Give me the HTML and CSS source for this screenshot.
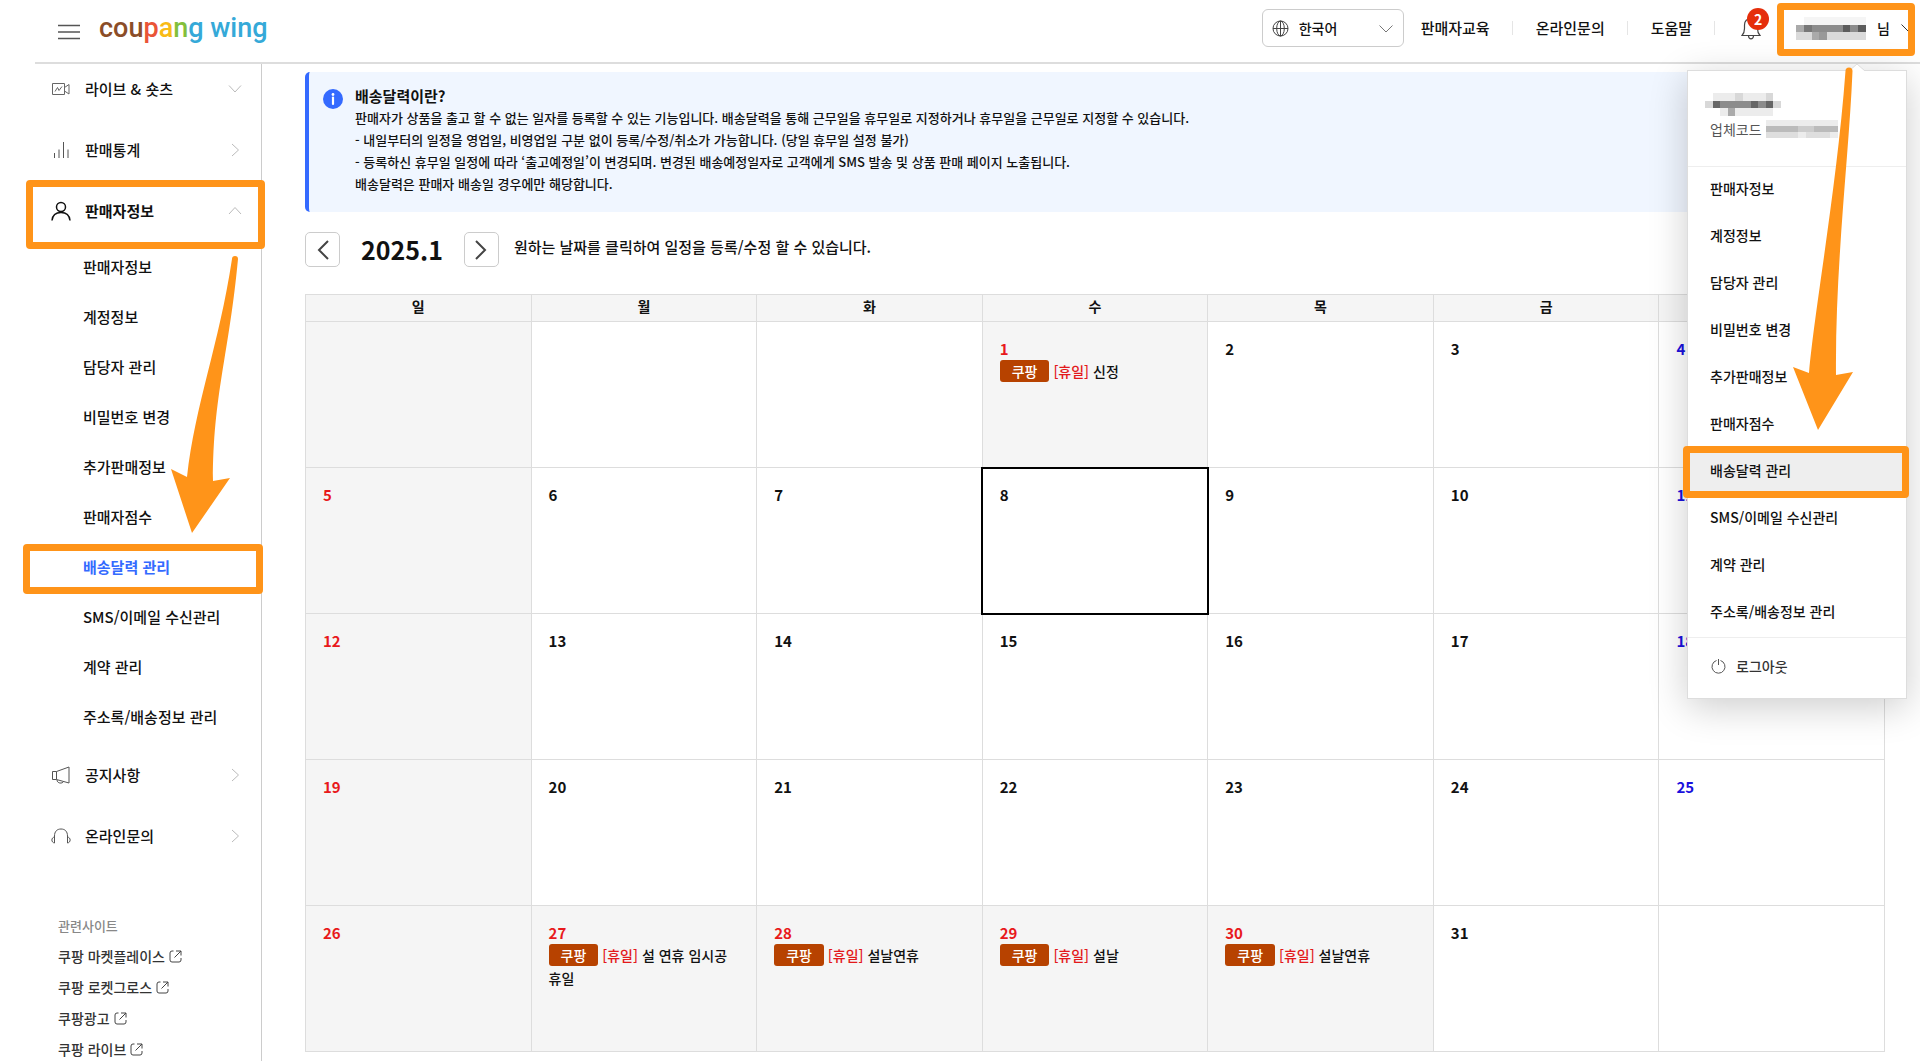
FILE: index.html
```
<!DOCTYPE html>
<html lang="ko">
<head>
    <meta charset="UTF-8">
    <meta name="viewport" content="width=device-width, initial-scale=1.0">
    <title>쿠팡 윙 - 배송달력 관리</title>
    <link rel="stylesheet" href="styles.css">
</head>
<body>
    <header class="header">
        <button type="button" class="menu-btn" aria-label="메뉴">
            <svg width="22" height="16" viewBox="0 0 22 16"><path d="M0 1.500h22M0 8h22M0 14.500h22" stroke="#555" stroke-width="1.300"/></svg>
        </button>
        <a href="#" class="logo"><span class="brown">cou</span><span class="red">p</span><span class="yellow">a</span><span class="green">n</span>g wing</a>

        <div class="header-right">
            <div class="lang">
                <svg class="lang-globe" width="17" height="17" viewBox="0 0 17 17" fill="none" stroke="#444"><circle cx="8.500" cy="8.500" r="7.500"/><ellipse cx="8.500" cy="8.500" rx="3.800" ry="7.500"/><path d="M8.500 1v15M1 8.500h15"/></svg>
                <select class="lang-select" aria-label="언어">
                    <option>한국어</option>
                </select>
                <svg class="lang-arrow" width="14" height="8" viewBox="0 0 14 8" fill="none" stroke="#777"><path d="M.5 .5L7 7l6.500-6.500"/></svg>
            </div>
            <nav class="top-nav">
                <a href="#">판매자교육</a>
                <a href="#">온라인문의</a>
                <a href="#">도움말</a>
            </nav>
            <button type="button" class="bell" aria-label="알림">
                <svg width="20" height="24" viewBox="0 0 20 24" fill="none" stroke="#444" stroke-width="1.200"><path d="M1 19.500h18c-2-2-2.500-3.500-2.500-7V9c0-4-2.500-6.500-6.500-6.500S3.500 5 3.500 9v3.500c0 3.500-.5 5-2.500 7zM7.500 20c.2 1.800 1.200 2.800 2.500 2.800s2.300-1 2.500-2.800"/></svg>
                <span class="bell-count">2</span>
            </button>
            <div class="account">
                <button type="button" class="account-btn">
                    <svg width="70" height="23" viewBox="0 0 9 3" preserveAspectRatio="none" shape-rendering="crispEdges">
                        <path fill="#f5f5f5" d="M1 0h8v1H1z"/>
                        <path fill="#dadada" d="M0 2h9v1H0z"/>
                        <path fill="#aaa" d="M0 1h1v1H0zM2 2h1v1H2z"/>
                        <path fill="#999" d="M3 2h1v1H3z"/>
                        <path fill="#8c8c8c" d="M1 1h8v1H1z"/>
                        <path fill="#777" d="M1 1h1v1H1z"/>
                        <path fill="#5c5c5c" d="M6 1h1v1H6zM8 1h1v1H8z"/>
                    </svg>
                    <span>님</span>
                    <svg width="14" height="8" viewBox="0 0 14 8" fill="none" stroke="#333"><path d="M.5 .5L7 7l6.500-6.500"/></svg>
                </button>
                <span class="mark mark-account"></span>

                <div class="dropdown">
                    <svg class="dropdown-caret" width="16" height="8" viewBox="0 0 16 8"><path d="M0 8l8-7 8 7" fill="#fff" stroke="#ddd"/></svg>
                    <div class="dropdown-head">
                        <svg width="76" height="23" viewBox="0 0 10 3" preserveAspectRatio="none" shape-rendering="crispEdges">
                            <path fill="#ececec" d="M1 0h8v1H1zM2 2h7v1H2z"/>
                            <path fill="#d8d8d8" d="M0 1h10v1H0zM4 0h1v1H4zM8 0h1v1H8z"/>
                            <path fill="#8c8c8c" d="M1 1h8v1H1z"/>
                            <path fill="#666" d="M1 1h1v1H1zM6 1h1v1H6zM8 1h1v1H8z"/>
                            <path fill="#aaa" d="M3 2h1v1H3z"/>
                        </svg>
                        <p>업체코드
                            <svg width="72" height="18" viewBox="0 0 9 3" preserveAspectRatio="none" shape-rendering="crispEdges">
                                <path fill="#ececec" d="M0 0h9v3H0z"/>
                                <path fill="#bbb" d="M0 1h4v1H0zM6 1h3v1H6z"/>
                                <path fill="#ccc" d="M4 1h2v1H4z"/>
                                <path fill="#dedede" d="M0 2h4v1H0zM5 2h3v1H5z"/>
                            </svg>
                        </p>
                    </div>
                    <ul class="dropdown-list">
                        <li><a href="#">판매자정보</a></li>
                        <li><a href="#">계정정보</a></li>
                        <li><a href="#">담당자 관리</a></li>
                        <li><a href="#">비밀번호 변경</a></li>
                        <li><a href="#">추가판매정보</a></li>
                        <li><a href="#">판매자점수</a></li>
                        <li class="active"><a href="#">배송달력 관리</a><span class="mark mark-drop"></span></li>
                        <li><a href="#">SMS/이메일 수신관리</a></li>
                        <li><a href="#">계약 관리</a></li>
                        <li><a href="#">주소록/배송정보 관리</a></li>
                    </ul>
                    <button type="button" class="logout">
                        <svg width="15" height="16" viewBox="0 0 15 16" fill="none" stroke="#555"><path d="M5.500 2.500a6.500 6.500 0 1 0 4 0M7.500 1v6"/></svg>
                        로그아웃
                    </button>
                    <svg class="arrow arrow-right" width="60" height="364" viewBox="0 0 60 364"><path fill="#ff9419" d="M52.500 5a3.500 3.500 0 0 1 7 0C56 90 42 200 43 309l17-3-35 58L0 301l16 6C22 240 44 120 52.500 5z"/></svg>
                </div>
            </div>
        </div>
    </header>

    <div class="container">
        <aside class="sidebar">
            <ul class="menu">
                <li>
                    <a href="#" class="menu-item">
                        <svg width="20" height="20" viewBox="0 0 20 20" fill="none" stroke="#666"><path d="M1.500 4.500h12v11h-12zM13.500 8.500l4.500-3v9.500l-4.500-3M4 12.500l2.500-4 1.500 3 3-4"/></svg>
                        라이브 &amp; 숏츠
                        <svg class="chevron" width="14" height="14" viewBox="0 0 14 14"><path d="M1 3.500l6 6.500 6-6.500"/></svg>
                    </a>
                </li>
                <li>
                    <a href="#" class="menu-item">
                        <svg width="20" height="20" viewBox="0 0 20 20" fill="none" stroke="#555"><path d="M3.500 13v5M8 9.500V18M12.500 2v16M17 9.500V18"/></svg>
                        판매통계
                        <svg class="chevron" width="14" height="14" viewBox="0 0 14 14"><path d="M4 1l6.500 6L4 13"/></svg>
                    </a>
                </li>
                <li>
                    <a href="#" class="menu-item open">
                        <svg width="20" height="20" viewBox="0 0 20 20" fill="none" stroke="#111" stroke-width="1.500"><circle cx="10" cy="6" r="4.500"/><path d="M1 19.500c.5-5 4-8 9-8s8.500 3 9 8"/></svg>
                        판매자정보
                        <svg class="chevron" width="14" height="14" viewBox="0 0 14 14"><path d="M1 10l6-6.500 6 6.500"/></svg>
                        <span class="mark mark-menu"></span>
                    </a>
                    <ul class="submenu">
                        <li><a href="#">판매자정보</a></li>
                        <li><a href="#">계정정보</a></li>
                        <li><a href="#">담당자 관리</a></li>
                        <li><a href="#">비밀번호 변경</a></li>
                        <li><a href="#">추가판매정보</a></li>
                        <li><a href="#">판매자점수</a></li>
                        <li class="active"><a href="#">배송달력 관리</a><span class="mark mark-sub"></span></li>
                        <li><a href="#">SMS/이메일 수신관리</a></li>
                        <li><a href="#">계약 관리</a></li>
                        <li><a href="#">주소록/배송정보 관리</a></li>
                    </ul>
                </li>
                <li>
                    <a href="#" class="menu-item">
                        <svg width="20" height="20" viewBox="0 0 20 20" fill="none" stroke="#555"><path d="M1.500 6.500h4v8h-4zM5.500 6.500L18 2v16L5.500 14.500M6 15c0 3.500 5.500 4 6.500 1.500"/></svg>
                        공지사항
                        <svg class="chevron" width="14" height="14" viewBox="0 0 14 14"><path d="M4 1l6.500 6L4 13"/></svg>
                    </a>
                </li>
                <li>
                    <a href="#" class="menu-item">
                        <svg width="20" height="20" viewBox="0 0 20 20" fill="none" stroke="#555"><path d="M3.500 17V10C3.500 5.500 6 3 10 3s6.500 2.500 6.500 7v7M3.500 11C0 11.500 0 16.500 3.500 17M16.500 11c3.500.5 3.500 5.500 0 6"/></svg>
                        온라인문의
                        <svg class="chevron" width="14" height="14" viewBox="0 0 14 14"><path d="M4 1l6.500 6L4 13"/></svg>
                    </a>
                </li>
            </ul>

            <div class="sites">
                <h2>관련사이트</h2>
                <a href="#">쿠팡 마켓플레이스 <svg width="13" height="13" viewBox="0 0 13 13"><path d="M4.500 1H3a2 2 0 0 0-2 2v7a2 2 0 0 0 2 2h7a2 2 0 0 0 2-2V8M7 1h5v4.500M12 1L5.500 7.500"/></svg></a>
                <a href="#">쿠팡 로켓그로스 <svg width="13" height="13" viewBox="0 0 13 13"><path d="M4.500 1H3a2 2 0 0 0-2 2v7a2 2 0 0 0 2 2h7a2 2 0 0 0 2-2V8M7 1h5v4.500M12 1L5.500 7.500"/></svg></a>
                <a href="#">쿠팡광고 <svg width="13" height="13" viewBox="0 0 13 13"><path d="M4.500 1H3a2 2 0 0 0-2 2v7a2 2 0 0 0 2 2h7a2 2 0 0 0 2-2V8M7 1h5v4.500M12 1L5.500 7.500"/></svg></a>
                <a href="#">쿠팡 라이브 <svg width="13" height="13" viewBox="0 0 13 13"><path d="M4.500 1H3a2 2 0 0 0-2 2v7a2 2 0 0 0 2 2h7a2 2 0 0 0 2-2V8M7 1h5v4.500M12 1L5.500 7.500"/></svg></a>
            </div>
            <svg class="arrow arrow-left" width="68" height="278" viewBox="0 0 68 278"><path fill="#ff9419" d="M61 4a3 3 0 0 1 6 0C58 100 42 140 42 226l17-3-38 55L0 214l16 8C24 150 48 90 61 4z"/></svg>
        </aside>

        <main class="content">
            <section class="notice">
                <svg class="notice-icon" width="20" height="20" viewBox="0 0 20 20"><circle cx="10" cy="10" r="10" fill="#346aff"/><circle cx="10" cy="5.500" r="1.400" fill="#fff"/><path d="M10 8.500V15" stroke="#fff" stroke-width="2.200" stroke-linecap="round"/></svg>
                <div>
                    <h1>배송달력이란?</h1>
                    <p>판매자가 상품을 출고 할 수 없는 일자를 등록할 수 있는 기능입니다. 배송달력을 통해 근무일을 휴무일로 지정하거나 휴무일을 근무일로 지정할 수 있습니다.</p>
                    <p>- 내일부터의 일정을 영업일, 비영업일 구분 없이 등록/수정/취소가 가능합니다. (당일 휴무일 설정 불가)</p>
                    <p>- 등록하신 휴무일 일정에 따라 ‘출고예정일’이 변경되며. 변경된 배송예정일자로 고객에게 SMS 발송 및 상품 판매 페이지 노출됩니다.</p>
                    <p>배송달력은 판매자 배송일 경우에만 해당합니다.</p>
                </div>
            </section>

            <div class="month">
                <button type="button" aria-label="이전 달"><svg width="12" height="20" viewBox="0 0 12 20"><path d="M11 1L2 10l9 9"/></svg></button>
                <h2>2025.1</h2>
                <button type="button" aria-label="다음 달"><svg width="12" height="20" viewBox="0 0 12 20"><path d="M1 1l9 9-9 9"/></svg></button>
                <p>원하는 날짜를 클릭하여 일정을 등록/수정 할 수 있습니다.</p>
            </div>

            <table class="calendar">
                <thead>
                    <tr><th>일</th><th>월</th><th>화</th><th>수</th><th>목</th><th>금</th><th>토</th></tr>
                </thead>
                <tbody>
                    <tr>
                        <td class="off"></td>
                        <td></td>
                        <td></td>
                        <td class="off"><strong>1</strong><p><span class="tag">쿠팡</span> <em>[휴일]</em> 신정</p></td>
                        <td><strong>2</strong></td>
                        <td><strong>3</strong></td>
                        <td class="sat"><strong>4</strong></td>
                    </tr>
                    <tr>
                        <td class="off"><strong>5</strong></td>
                        <td><strong>6</strong></td>
                        <td><strong>7</strong></td>
                        <td class="today"><strong>8</strong></td>
                        <td><strong>9</strong></td>
                        <td><strong>10</strong></td>
                        <td class="sat"><strong>11</strong></td>
                    </tr>
                    <tr>
                        <td class="off"><strong>12</strong></td>
                        <td><strong>13</strong></td>
                        <td><strong>14</strong></td>
                        <td><strong>15</strong></td>
                        <td><strong>16</strong></td>
                        <td><strong>17</strong></td>
                        <td class="sat"><strong>18</strong></td>
                    </tr>
                    <tr>
                        <td class="off"><strong>19</strong></td>
                        <td><strong>20</strong></td>
                        <td><strong>21</strong></td>
                        <td><strong>22</strong></td>
                        <td><strong>23</strong></td>
                        <td><strong>24</strong></td>
                        <td class="sat"><strong>25</strong></td>
                    </tr>
                    <tr>
                        <td class="off"><strong>26</strong></td>
                        <td class="off"><strong>27</strong><p><span class="tag">쿠팡</span> <em>[휴일]</em> 설 연휴 임시공휴일</p></td>
                        <td class="off"><strong>28</strong><p><span class="tag">쿠팡</span> <em>[휴일]</em> 설날연휴</p></td>
                        <td class="off"><strong>29</strong><p><span class="tag">쿠팡</span> <em>[휴일]</em> 설날</p></td>
                        <td class="off"><strong>30</strong><p><span class="tag">쿠팡</span> <em>[휴일]</em> 설날연휴</p></td>
                        <td><strong>31</strong></td>
                        <td></td>
                    </tr>
                </tbody>
            </table>
        </main>
    </div>
</body>
</html>
```
FILE: styles.css
```
* {
    box-sizing: border-box;
}

body {
    margin: 0;
    font-family: "Noto Sans CJK KR", "Noto Sans", sans-serif;
    font-size: 14px;
    font-weight: 500;
    line-height: 22px;
    color: #111;
    background: #fff;
    overflow: hidden;
}

h1, h2, p, ul {
    margin: 0;
    padding: 0;
}

ul {
    list-style: none;
}

a {
    color: inherit;
    text-decoration: none;
}

button, select {
    font: inherit;
    color: inherit;
    background: none;
    border: none;
    padding: 0;
    cursor: pointer;
}

svg {
    flex-shrink: 0;
}

/* header */
.header {
    display: flex;
    align-items: center;
    height: 64px;
    margin-left: 35px;
    padding: 0 0 6px 23px;
    border-bottom: 2px solid #ddd;
}

.menu-btn {
    display: flex;
    margin-top: 8px;
}

.logo {
    margin-left: 19px;
    font-family: Roboto, sans-serif;
    font-size: 27px;
    font-weight: 500;
    line-height: 40px;
    color: #35a9d8;
}

.brown { color: #8b4d28; }
.red { color: #ea5437; }
.yellow { color: #f9bb16; }
.green { color: #83bf3c; }

.header-right {
    display: flex;
    align-items: center;
    margin-left: auto;
}

.lang {
    position: relative;
    width: 142px;
}

.lang-select {
    display: block;
    width: 100%;
    height: 38px;
    padding: 0 36px;
    border: 1px solid #ccc;
    border-radius: 6px;
    appearance: none;
}

.lang-globe,
.lang-arrow {
    position: absolute;
    pointer-events: none;
}

.lang-globe {
    left: 10px;
    top: 11px;
}

.lang-arrow {
    right: 11px;
    top: 16px;
}

.top-nav {
    display: flex;
}

.top-nav a {
    position: relative;
    padding: 0 23px;
    font-size: 15px;
}

.top-nav a:first-child {
    padding-left: 17px;
}

.top-nav a::after {
    content: "";
    position: absolute;
    right: 0;
    top: 4px;
    height: 14px;
    border-right: 1px solid #e5e5e5;
}

.bell {
    position: relative;
    display: flex;
    margin-left: 26px;
}

.bell-count {
    position: absolute;
    left: 6px;
    top: -8px;
    width: 22px;
    height: 22px;
    border-radius: 50%;
    background: #e52e0b;
    color: #fff;
    font-weight: 700;
    text-align: center;
}

.account {
    position: relative;
    margin-left: 35px;
    padding-right: 5px;
}

.account-btn {
    display: flex;
    align-items: center;
    gap: 11px;
}

/* highlight boxes */
.mark {
    position: absolute;
    z-index: 3;
    border: 7px solid #ff9419;
    border-radius: 4px;
    pointer-events: none;
}

.mark-account {
    inset: -14px 5px -16px -19px;
}

.mark-menu {
    inset: -6px -4px -14px 26px;
}

.mark-sub {
    inset: 2px -2px -2px 23px;
}

.mark-drop {
    inset: -3px -3px -2px -5px;
}

.arrow {
    position: absolute;
    z-index: 4;
    pointer-events: none;
}

.arrow-left {
    left: 171px;
    top: 191px;
}

.arrow-right {
    right: 53px;
    top: -5px;
}

/* account dropdown */
.dropdown {
    position: absolute;
    z-index: 2;
    right: 13px;
    top: 53px;
    width: 220px;
    border: 1px solid #ddd;
    background: #fff;
    box-shadow: 0 8px 36px rgba(0, 0, 0, 0.2);
}

.dropdown-caret {
    position: absolute;
    right: 41px;
    top: -8px;
}

.dropdown-head {
    height: 96px;
    padding: 22px 17px 0;
    border-bottom: 1px solid #eee;
}

.dropdown-head svg {
    display: block;
}

.dropdown-head p {
    display: flex;
    align-items: center;
    gap: 4px;
    margin-top: 2px;
    padding-left: 5px;
    font-weight: 400;
    color: #555;
}

.dropdown-list {
    border-bottom: 1px solid #eee;
}

.dropdown-list li {
    position: relative;
}

.dropdown-list a {
    display: block;
    padding: 0 0 4px 22px;
    line-height: 43px;
}

.dropdown-list .active {
    background: #eee;
}

.logout {
    display: flex;
    align-items: center;
    gap: 10px;
    height: 60px;
    padding: 0 0 4px 23px;
    color: #333;
}

/* layout */
.container {
    display: flex;
}

.sidebar {
    position: relative;
    flex: 0 0 262px;
    border-right: 1px solid #ccc;
    font-size: 15px;
}

.menu-item {
    position: relative;
    display: flex;
    align-items: center;
    gap: 14px;
    height: 49px;
    margin-bottom: 12px;
    padding: 0 19px 0 51px;
}

.menu-item.open {
    font-weight: 700;
}

.chevron {
    margin-left: auto;
    fill: none;
    stroke: #bbb;
}

.submenu {
    margin: -5px 0 8px;
}

.submenu li {
    position: relative;
}

.submenu a {
    display: block;
    padding-left: 83px;
    line-height: 50px;
}

.submenu .active {
    color: #346aff;
    font-weight: 700;
}

.sites {
    padding: 35px 0 0 58px;
}

.sites h2 {
    padding: 8px 0 4px;
    font-size: 13px;
    font-weight: 500;
    line-height: 22px;
    color: #888;
}

.sites a {
    display: flex;
    align-items: center;
    gap: 4px;
    font-size: 14px;
    line-height: 31px;
    color: #333;
}

.sites svg {
    fill: none;
    stroke: #444;
}

.content {
    flex: 1;
    min-width: 0;
    padding: 8px 35px 9px 43px;
}

.notice {
    display: flex;
    gap: 12px;
    padding: 13px 14px 17px;
    border-left: 4px solid #346aff;
    border-radius: 5px;
    background: #f0f6ff;
    font-size: 13px;
}

.notice-icon {
    margin-top: 4px;
}

.notice h1 {
    font-size: 15px;
    font-weight: 700;
    line-height: 22px;
}

.month {
    display: flex;
    align-items: center;
    padding: 20px 0 27px;
}

.month button {
    display: flex;
    align-items: center;
    justify-content: center;
    width: 35px;
    height: 35px;
    border: 1px solid #ccc;
    border-radius: 5px;
}

.month button svg {
    fill: none;
    stroke: #444;
    stroke-width: 2;
}

.month h2 {
    margin: 0 21px;
    font-size: 25px;
    line-height: 35px;
}

.month p {
    margin-left: 15px;
    padding-bottom: 5px;
    font-size: 15px;
}

.calendar {
    width: 100%;
    height: calc(100vh - 303px);
    border-collapse: collapse;
    table-layout: fixed;
}

.calendar th,
.calendar td {
    border: 1px solid #ddd;
}

.calendar th {
    height: 26px;
    padding: 0 0 4px;
    background: #f5f5f5;
    font-weight: 700;
}

.calendar td {
    height: 146px;
    padding: 16px 17px;
    vertical-align: top;
}

.calendar strong {
    display: block;
    font-size: 15px;
    font-weight: 700;
}

.calendar p {
    line-height: 23px;
}

.calendar em {
    font-style: normal;
    color: #e3191b;
}

.calendar .off {
    background: #f5f5f5;
}

.off strong {
    color: #e8191b;
}

.sat strong {
    color: #1a10dd;
}

.calendar .today {
    outline: 2px solid #000;
    outline-offset: -1px;
}

.tag {
    display: inline-block;
    padding: 0 12px;
    border-radius: 3px;
    background: #b74200;
    color: #fff;
    line-height: 22px;
}
```
